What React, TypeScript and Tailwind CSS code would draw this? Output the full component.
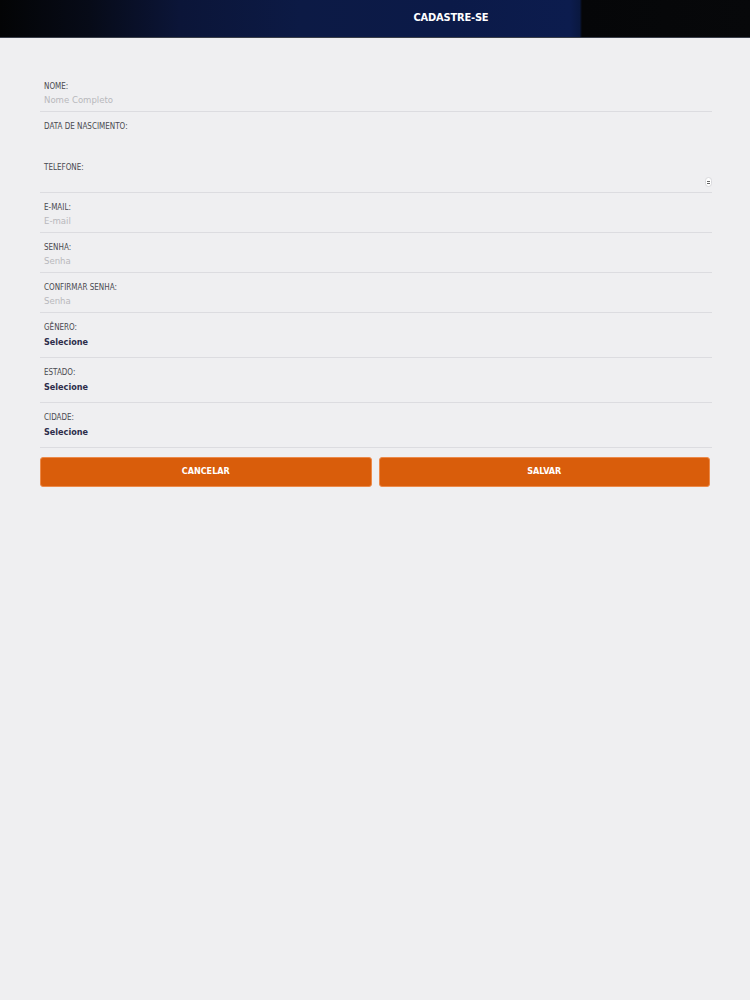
const font = { fontFamily: '"DejaVu Sans Condensed", "DejaVu Sans", sans-serif' };

type Field = { label: string; placeholder?: string; kind: 'text' | 'select' | 'blank' | 'number'; divider: boolean };

const fields: Field[] = [
  { label: 'NOME:', placeholder: 'Nome Completo', kind: 'text', divider: true },
  { label: 'DATA DE NASCIMENTO:', kind: 'blank', divider: false },
  { label: 'TELEFONE:', kind: 'number', divider: true },
  { label: 'E-MAIL:', placeholder: 'E-mail', kind: 'text', divider: true },
  { label: 'SENHA:', placeholder: 'Senha', kind: 'text', divider: true },
  { label: 'CONFIRMAR SENHA:', placeholder: 'Senha', kind: 'text', divider: true },
  { label: 'GÊNERO:', kind: 'select', divider: true },
  { label: 'ESTADO:', kind: 'select', divider: true },
  { label: 'CIDADE:', kind: 'select', divider: true },
];

const Row = ({ field }: { field: Field }) => {
  const pad = field.kind === 'select' ? 'pb-[7px]' : field.divider ? 'pb-[5px]' : 'pb-[7px]';
  return (
    <div className={`pl-1 pt-[9px] ${pad} ${field.divider ? 'border-b border-[#dcdce0]' : ''}`}>
      <div className="text-[8px] leading-[12px] text-[#4a4a50]">{field.label}</div>
      {field.kind === 'select' ? (
        <div className="text-[9px] leading-[16px] font-bold text-[#2d2d4a]">Selecione</div>
      ) : (
        <div className="relative h-[13px] text-[9.5px] leading-[13px] text-[#b8b8bc]">
          {field.placeholder}
          {field.kind === 'number' && (
            <span className="absolute right-0 top-[3px] flex h-[10px] w-[7px] flex-col items-center justify-center gap-[1px] rounded-full border border-[#d8d8dc] bg-white">
              <span className="h-[1px] w-[3px] bg-[#666]" />
              <span className="h-[1px] w-[3px] bg-[#666]" />
            </span>
          )}
        </div>
      )}
    </div>
  );
};

const App = () => {
  return (
    <div className="min-h-screen w-[750px] bg-[#efeff1]" style={font}>
      <header className="flex h-[38px] items-center justify-center border-b border-[#3a3f4a] bg-[linear-gradient(90deg,#030405_0%,#070b18_12%,#0b1538_24%,#0c1a45_40%,#0b1a48_60%,#0c1c4e_76%,#0a1840_77.3%,#050608_77.6%,#07080a_100%)]">
        <h1 className="ml-[152px] text-[11px] font-bold tracking-[-0.2px] text-white">CADASTRE-SE</h1>
      </header>
      <main className="ml-[40px] w-[672px] pt-[34px]">
        {fields.map((f) => (
          <Row key={f.label} field={f} />
        ))}
        <div className="mt-[9px] flex gap-[7px] pr-[2px]">
          <button
            type="button"
            className="h-[30px] flex-1 rounded-[3px] border border-[#ec8a4a] bg-[#d95d0b] text-[9px] font-bold text-white"
          >
            CANCELAR
          </button>
          <button
            type="button"
            className="h-[30px] flex-1 rounded-[3px] border border-[#ec8a4a] bg-[#d95d0b] text-[9px] font-bold text-white"
          >
            SALVAR
          </button>
        </div>
      </main>
    </div>
  );
};

export default App;
